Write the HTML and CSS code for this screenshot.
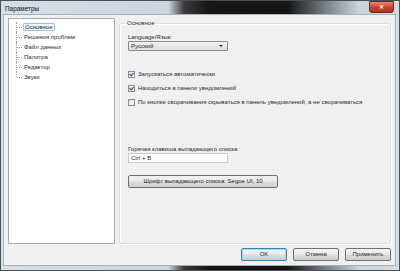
FILE: index.html
```html
<!DOCTYPE html>
<html lang="ru">
<head>
    <meta charset="UTF-8">
    <title>Параметры</title>
    <link rel="stylesheet" href="styles.css">
</head>
<body>
    <div class="window">
        <div class="titlebar">
            <span class="title">Параметры</span>
            <span class="close">&#x2715;</span>
        </div>
        <div class="client">
            <div class="main">
                <ul class="tree">
                    <li class="selected"><span>Основное</span></li>
                    <li><span>Решения проблем</span></li>
                    <li><span>Файл данных</span></li>
                    <li><span>Палитра</span></li>
                    <li><span>Редактор</span></li>
                    <li class="last"><span>Звуки</span></li>
                </ul>
                <fieldset class="group">
                    <legend>Основное</legend>
                    <div class="label">Language/Язык:</div>
                    <div class="select">Русский<span class="arrow"></span></div>

                    <div class="checks">
                        <div class="check"><span class="box on"></span>Запускаться автоматически</div>
                        <div class="check"><span class="box on"></span>Находиться в панели уведомлений</div>
                        <div class="check"><span class="box"></span>По кнопке сворачивания скрываться в панель уведомлений, а не сворачиваться</div>
                    </div>

                    <div class="label hotkey-label">Горячая клавиша выпадающего списка</div>
                    <div class="input">Ctrl + B</div>
                    <div class="btn font-btn">Шрифт выпадающего списка: Segoe UI, 10</div>
                </fieldset>
            </div>
            <div class="buttons">
                <div class="btn default">OK</div>
                <div class="btn">Отмена</div>
                <div class="btn">Применить</div>
            </div>
        </div>
    </div>
</body>
</html>
```
FILE: styles.css
```css
body {
    margin: 0;
    font-family: "Liberation Sans", Arial, sans-serif;
    background: #2a2a2a;
}

.window {
    width: 400px;
    height: 271px;
    box-sizing: border-box;
    border: 1px solid #4a4f55;
    background: linear-gradient(to right, #d6dee6 0, #cdd6df 42%, #3a3a3a 46%, #161616 52%, #141414 72%, #7d848b 82%, #cbd3db 90%, #d3dbe3 100%);
    display: flex;
    flex-direction: column;
    padding: 0 3px 4px 2px;
}

.titlebar {
    height: 13px;
    display: flex;
    align-items: center;
    justify-content: space-between;
}

.title {
    font-size: 6.4px;
    color: #111;
    padding-left: 2px;
    padding-top: 2px;
}

.close {
    width: 23px;
    height: 10px;
    margin-top: -2px;
    margin-right: 2px;
    background: linear-gradient(#e08a78, #c8412a 55%, #b8321e);
    border: 1px solid #6e2a20;
    border-radius: 0 0 3px 3px;
    color: #fff;
    font-size: 6px;
    font-weight: bold;
    text-align: center;
    line-height: 10px;
}

.client {
    flex: 1;
    background: #f0f0f0;
    border: 1px solid #a9b3bd;
    display: flex;
    flex-direction: column;
    padding: 3px 4px 4px 4px;
    font-size: 6px;
    color: #2a2a2a;
    white-space: nowrap;
}

.main {
    flex: 1;
    display: flex;
    gap: 4px;
}

.tree {
    width: 107px;
    box-sizing: border-box;
    margin: 0;
    padding: 3px 0 0 7px;
    list-style: none;
    background: #fff;
    border: 1px solid #a8abb0;
}

.tree li {
    position: relative;
    height: 10px;
    padding-left: 6px;
    line-height: 10px;
    border-left: 1px dotted #a0a0a0;
}

.tree li::before {
    content: "";
    position: absolute;
    left: 0;
    top: 5px;
    width: 5px;
    border-top: 1px dotted #a0a0a0;
}

.tree li.last {
    border-left: none;
    margin-left: 1px;
}

.tree li.last::after {
    content: "";
    position: absolute;
    left: -1px;
    top: 0;
    height: 5px;
    border-left: 1px dotted #a0a0a0;
}

.tree li span {
    padding: 0 1px;
}

.tree li.selected span {
    border: 1px solid #9cc6e8;
    background: #eef5fc;
    border-radius: 1px;
}

.group {
    flex: 1;
    margin: 2px 0 0 0;
    padding: 8px 8px 0 8px;
    border: 1px solid #d5dfe5;
    box-shadow: inset 1px 1px 0 #fff, 1px 1px 0 #fff;
    border-radius: 2px;
}

.group legend {
    padding: 0 1px;
    margin-left: -2px;
}

.select {
    position: relative;
    width: 100px;
    height: 10px;
    box-sizing: border-box;
    margin-top: 1px;
    padding-left: 2px;
    line-height: 8px;
    border: 1px solid #8a8a8a;
    background: linear-gradient(#f4f4f4, #dcdcdc);
    border-radius: 1px;
}

.arrow {
    position: absolute;
    right: 4px;
    top: 3px;
    border-left: 2px solid transparent;
    border-right: 2px solid transparent;
    border-top: 2px solid #222;
}

.checks {
    margin-top: 19px;
    display: flex;
    flex-direction: column;
    gap: 6px;
}

.check {
    display: flex;
    align-items: center;
    gap: 3px;
    height: 8px;
}

.box {
    width: 7px;
    height: 7px;
    box-sizing: border-box;
    border: 1px solid #8e8f8f;
    background: linear-gradient(135deg, #dcdcdc, #fbfbfb);
    position: relative;
}

.box.on::after {
    content: "";
    position: absolute;
    left: 1px;
    top: 0;
    width: 2px;
    height: 3px;
    border-right: 1px solid #2a4a8a;
    border-bottom: 1px solid #2a4a8a;
    transform: rotate(40deg);
}

.hotkey-label {
    margin-top: 40px;
}

.input {
    width: 100px;
    height: 10px;
    box-sizing: border-box;
    margin-top: 1px;
    padding-left: 2px;
    line-height: 8px;
    border: 1px solid #c8ccd2;
    background: #fff;
}

.btn {
    height: 13px;
    box-sizing: border-box;
    border: 1px solid #707070;
    border-radius: 2px;
    background: linear-gradient(#f2f2f2 0, #ebebeb 48%, #dddddd 52%, #cfcfcf 100%);
    text-align: center;
    line-height: 11px;
    color: #222;
}

.font-btn {
    width: 150px;
    margin-top: 12px;
}

.buttons {
    display: flex;
    justify-content: flex-end;
    gap: 6px;
    margin-top: 4px;
}

.buttons .btn {
    width: 46px;
}

.buttons .btn.default {
    border-color: #3c7fb1;
    box-shadow: inset 0 0 0 1px #a6d8f5;
}
```
